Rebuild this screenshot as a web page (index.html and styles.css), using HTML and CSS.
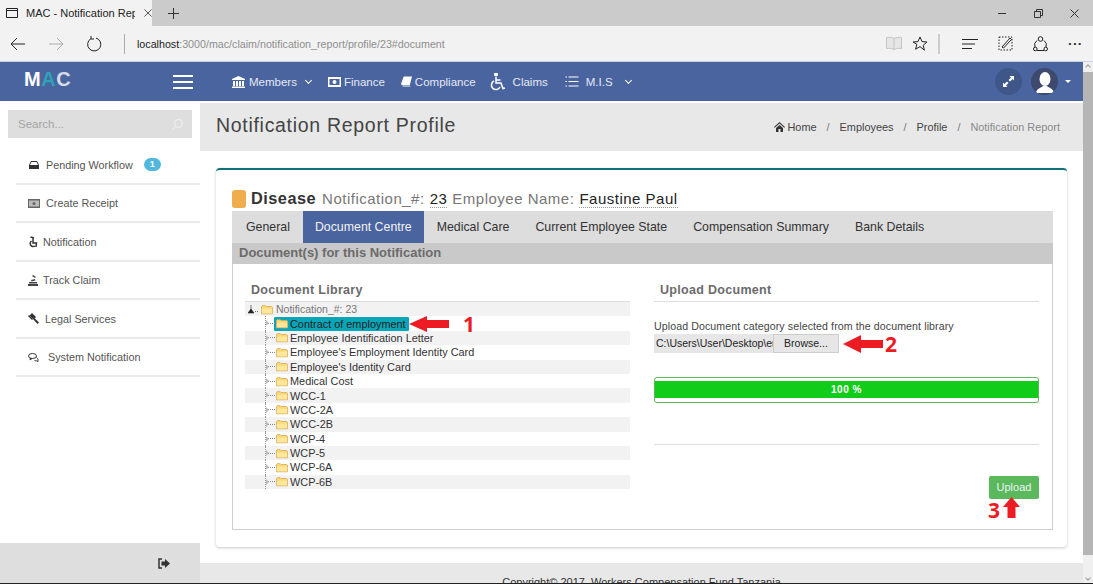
FILE: index.html
```html
<!DOCTYPE html>
<html>
<head>
    <title>MAC - Notification Report</title>
    <link rel="stylesheet" href="styles.css">
</head>
<body>
    <svg class="defs" width="0" height="0">
        <symbol id="folder" viewBox="0 0 14 12">
            <path d="M0.5 11V2.5L1.500 1.500H5L6 2.500H12.500L13.500 3.500V11Z" fill="#fbd975" stroke="#d9ab5a"/>
            <path d="M1 5H13V10.500H1Z" fill="#fde79c"/>
        </symbol>
    </svg>

    <div class="tabstrip">
        <div class="tab">
            <svg width="12" height="10" viewBox="0 0 12 10" fill="none" stroke="#222"><path d="M.5.5h11v9H.5zM.5 2.500h11"/></svg>
            <span class="tab-title">MAC - Notification Report</span>
            <svg width="8" height="8" viewBox="0 0 9 9" stroke="#444"><path d="M.5.5l8 8M8.500.5l-8 8"/></svg>
        </div>
        <svg class="newtab" width="11" height="11" viewBox="0 0 11 11" stroke="#333"><path d="M5.500 0v11M0 5.500h11"/></svg>
        <div class="winbtns">
            <svg width="9" height="9" viewBox="0 0 9 9" stroke="#333"><path d="M0 4.500h8"/></svg>
            <svg width="9" height="9" viewBox="0 0 9 9" fill="none" stroke="#333"><path d="M.5 2.500h6v6h-6zM2.500 2.500v-2h6v6h-2"/></svg>
            <svg width="9" height="9" viewBox="0 0 9 9" stroke="#333"><path d="M.5.5l8 8M8.500.5l-8 8"/></svg>
        </div>
    </div>

    <div class="addressbar">
        <svg class="nav-btn" width="16" height="14" viewBox="0 0 16 14" fill="none" stroke="#222"><path d="M15 7H1M7 1L1 7l6 6"/></svg>
        <svg class="nav-btn" width="16" height="14" viewBox="0 0 16 14" fill="none" stroke="#aaa"><path d="M1 7h14M9 1l6 6-6 6"/></svg>
        <svg class="nav-btn" width="16" height="16" viewBox="0 0 16 16" fill="none" stroke="#222"><path d="M5 2.600A6.600 6.600 0 1 0 10 2M5 0v3h3"/></svg>
        <div class="url"><b>localhost</b>:3000/mac/claim/notification_report/profile/23#document</div>
        <svg width="16" height="15" viewBox="0 0 16 15" fill="#e6e6e6" stroke="#c4c4c4"><path d="M8 2.500C6 1.500 3 1 .5 1.500v11c2.500-.5 5.500 0 7.500 1 2-1 5-1.500 7.500-1v-11C13 1 10 1.500 8 2.500zM8 2.500v11"/></svg>
        <svg class="star" width="16" height="15" viewBox="0 0 16 15" fill="none" stroke="#222"><path d="M8 1l2 4.600 5 .4-3.800 3.300 1.200 4.900L8 10.600 3.600 13.200l1.200-4.900L1 6l5-.4z"/></svg>
        <span class="bar-sep"></span>
        <svg class="tool" width="16" height="10" viewBox="0 0 16 10" stroke="#222"><path d="M0 .5h16M0 5h13M0 9.500h10"/></svg>
        <svg class="tool" width="15" height="15" viewBox="0 0 15 15" fill="none" stroke="#222"><path d="M1 1h13v13H1z" stroke-dasharray="1.500 1.500"/><path d="M4 11L12 2l1.500 1.500L5.500 12z"/></svg>
        <svg class="tool" width="15" height="16" viewBox="0 0 15 16" fill="none" stroke="#222"><path d="M4 4.500a5.500 5.500 0 0 0-2 6.500M11 4.500a5.500 5.500 0 0 1 2 6.500M4 14.500h7"/><circle cx="7.500" cy="3" r="2.300"/><circle cx="2.300" cy="13" r="1.800"/><circle cx="12.700" cy="13" r="1.800"/></svg>
        <span class="dots">&#8226;&#8226;&#8226;</span>
    </div>

    <div class="viewport">
        <div class="page">
            <header class="navbar">
                <div class="brand"><span class="brand-m">M</span><span class="brand-a">A</span>C</div>
                <div class="burger"><i></i><i></i><i></i></div>
                <nav class="topnav">
                    <a class="members">
                        <svg width="13" height="12" viewBox="0 0 13 12" fill="#fff"><path d="M6.500 0L13 3v1H0V3zM1 5h2v5H1zM4 5h2v5H4zM7 5h2v5H7zM10 5h2v5h-2zM0 10.500h13V12H0z"/></svg>
                        Members <span class="chev"></span>
                    </a>
                    <a class="finance">
                        <svg width="13" height="10" viewBox="0 0 13 10"><path d="M0 0h13v10H0z" fill="#fff"/><path d="M1.500 2h10v6h-10z" fill="#4a64a0"/><circle cx="6.500" cy="5" r="2" fill="#fff"/></svg>
                        Finance
                    </a>
                    <a class="compliance">
                        <svg width="11" height="11" viewBox="0 0 12 11" fill="#fff"><path d="M3 0h9L9.500 9.500H1.500A1.500 1.500 0 0 1 0 8z"/><path d="M1.500 10h8l.5-.5v1.500H2z"/></svg>
                        Compliance
                    </a>
                    <a class="claims">
                        <svg width="16" height="18" viewBox="0 0 15 18" fill="none" stroke="#fff" stroke-width="1.500"><circle cx="5.500" cy="1.500" r="1.300" fill="#fff"/><path d="M5.500 4v6h5l2 5.500 2-.5M5.500 7h4.500"/><path d="M3.500 8a4.500 4.500 0 1 0 6 6"/></svg>
                        Claims
                    </a>
                    <a class="mis">
                        <svg width="14" height="11" viewBox="0 0 13 11" stroke="#fff"><path d="M3 1h10M3 5.500h10M3 10h10M0 1h1.500M0 5.500h1.500M0 10h1.500"/></svg>
                        <span class="mis-label">M.I.S</span> <span class="chev"></span>
                    </a>
                </nav>
                <div class="nav-right">
                    <span class="round-btn">
                        <svg width="11" height="11" viewBox="0 0 11 11" fill="#fff"><path d="M6.500 0H11v4.500L9.500 3 7 5.500 5.500 4 8 1.500zM4.500 11H0V6.500L1.500 8 4 5.500 5.500 7 3 9.500z"/></svg>
                    </span>
                    <span class="round-btn avatar">
                        <svg width="26" height="26" viewBox="0 0 26 26" fill="#fff"><ellipse cx="13" cy="10" rx="5.500" ry="7"/><path d="M4 24c1-5 5-5 7-7h4c2 2 6 2 7 7z"/></svg>
                    </span>
                    <span class="caret"></span>
                </div>
            </header>

            <div class="layout">
                <aside class="sidebar">
                    <div class="search"><span class="search-text">Search...</span>
                        <svg width="11" height="11" viewBox="0 0 11 11" fill="none" stroke="#f2f2f2"><circle cx="6.500" cy="4.500" r="4"/><path d="M3.500 7.500L.5 10.500"/></svg>
                    </div>
                    <ul class="menu">
                        <li class="pad-wide">
                            <svg width="10" height="8" viewBox="0 0 10 8"><path d="M2 0h6l2 4v4H0V4z" fill="#333"/><path d="M2.500 1h5L9 4H1z" fill="#fff"/></svg>
                            <span>Pending Workflow</span> <span class="badge">1</span>
                        </li>
                        <li class="pad-wide">
                            <svg width="12" height="9" viewBox="0 0 12 9"><path d="M0 0h12v9H0z" fill="#666"/><path d="M1 1.500h10v6H1z" fill="#bbb"/><circle cx="6" cy="4.500" r="1.500" fill="#666"/></svg>
                            <span>Create Receipt</span>
                        </li>
                        <li class="pad-narrow">
                            <svg width="10" height="12" viewBox="0 0 9 12" fill="none" stroke="#333" stroke-width="1.500"><path d="M2 1l3.500 1M4.500 2.500V7H8l-.5 4"/><path d="M3 5a3 3 0 1 0 3.500 5"/></svg>
                            <span>Notification</span>
                        </li>
                        <li class="pad-narrow">
                            <svg width="10" height="11" viewBox="0 0 10 11" fill="#444"><path d="M0 9h10v2H0zM1 7h8v1.500H1zM3 5l4-1 .5 1.500-4 1zM5 0l3 2-1 1-3-2z"/></svg>
                            <span>Track Claim</span>
                        </li>
                        <li class="pad-mid">
                            <svg width="11" height="11" viewBox="0 0 11 11" fill="#333"><path d="M4 0l4 4-2.500 2.500-4-4zM5 6l1.200-1.200L11 9.500 9.500 11z"/><path d="M0 3l1-1 4 4-1 1z"/></svg>
                            <span>Legal Services</span>
                        </li>
                        <li class="pad-sys">
                            <svg width="11" height="9" viewBox="0 0 11 9" fill="none" stroke="#333"><ellipse cx="4.500" cy="3" rx="4" ry="2.500"/><path d="M8.500 4.500c2 1.500 1.500 3 1.500 4-1-.5-2-1-3.500-.8M2.500 5L2 7l2-1.500"/></svg>
                            <span>System Notification</span>
                        </li>
                    </ul>
                    <div class="side-foot">
                        <svg width="12" height="11" viewBox="0 0 12 11"><path d="M4 1H1v9h3" fill="none" stroke="#333" stroke-width="1.500"/><path d="M3.500 3.500H7V1l5 4.500L7 10V7.500H3.500z" fill="#333"/></svg>
                    </div>
                </aside>

                <main class="content">
                    <div class="page-head">
                        <h1>Notification Report Profile</h1>
                        <div class="crumbs">
                            <svg width="11" height="10" viewBox="0 0 11 10" fill="#333"><path d="M5.500 0L11 5l-.7.700L5.500 1.500.7 5.700 0 5zM2 6l3.500-3L9 6v4H6.500V7h-2v3H2z"/></svg>
                            <span class="crumb">Home</span><span class="slash">/</span>
                            <span class="crumb">Employees</span><span class="slash">/</span>
                            <span class="crumb">Profile</span><span class="slash">/</span>
                            <span class="crumb last">Notification Report</span>
                        </div>
                    </div>

                    <section class="card">
                        <div class="title-row">
                            <span class="tag"></span>
                            <b class="disease">Disease</b>
                            <span class="dim">Notification_#:</span> <span class="val">23</span>
                            <span class="dim">Employee Name:</span> <span class="val">Faustine Paul</span>
                        </div>
                        <div class="tabs">
                            <a>General</a>
                            <a class="active">Document Centre</a>
                            <a>Medical Care</a>
                            <a>Current Employee State</a>
                            <a>Compensation Summary</a>
                            <a>Bank Details</a>
                        </div>
                        <div class="panel-title">Document(s) for this Notification</div>
                        <div class="panel">
                            <div class="library">
                                <h3>Document Library</h3>
                                <div class="tree">
                                    <div class="tree-root">
                                        <svg width="11" height="9" viewBox="0 0 11 9"><path d="M3 0v8M0 8h6l-3-4z" fill="#222" stroke="#222" stroke-width=".6"/><path d="M7 6.500h4" stroke="#777" stroke-dasharray="1 1"/></svg>
                                        <svg class="fld" width="12" height="11"><use href="#folder"/></svg>
                                        <span class="root-label">Notification_#: 23</span>
                                    </div>
                                    <ul class="tree-list">
                                        <li><i class="conn"></i><span class="node selected"><svg class="fld" width="12" height="11"><use href="#folder"/></svg>Contract of employment</span></li>
                                        <li><i class="conn"></i><span class="node"><svg class="fld" width="12" height="11"><use href="#folder"/></svg>Employee Identification Letter</span></li>
                                        <li><i class="conn"></i><span class="node"><svg class="fld" width="12" height="11"><use href="#folder"/></svg>Employee's Employment Identity Card</span></li>
                                        <li><i class="conn"></i><span class="node"><svg class="fld" width="12" height="11"><use href="#folder"/></svg>Employee's Identity Card</span></li>
                                        <li><i class="conn"></i><span class="node"><svg class="fld" width="12" height="11"><use href="#folder"/></svg>Medical Cost</span></li>
                                        <li><i class="conn"></i><span class="node"><svg class="fld" width="12" height="11"><use href="#folder"/></svg>WCC-1</span></li>
                                        <li><i class="conn"></i><span class="node"><svg class="fld" width="12" height="11"><use href="#folder"/></svg>WCC-2A</span></li>
                                        <li><i class="conn"></i><span class="node"><svg class="fld" width="12" height="11"><use href="#folder"/></svg>WCC-2B</span></li>
                                        <li><i class="conn"></i><span class="node"><svg class="fld" width="12" height="11"><use href="#folder"/></svg>WCP-4</span></li>
                                        <li><i class="conn"></i><span class="node"><svg class="fld" width="12" height="11"><use href="#folder"/></svg>WCP-5</span></li>
                                        <li><i class="conn"></i><span class="node"><svg class="fld" width="12" height="11"><use href="#folder"/></svg>WCP-6A</span></li>
                                        <li><i class="conn"></i><span class="node"><svg class="fld" width="12" height="11"><use href="#folder"/></svg>WCP-6B</span></li>
                                    </ul>
                                </div>
                            </div>
                            <div class="uploader">
                                <h3>Upload Document</h3>
                                <p class="hint">Upload Document category selected from the document library</p>
                                <div class="filepick">
                                    <span class="path">C:\Users\User\Desktop\en</span>
                                    <span class="browse">Browse...</span>
                                </div>
                                <div class="progress"><div class="progress-bar">100 %</div></div>
                                <hr class="rule">
                                <div class="actions"><span class="btn-upload">Upload</span></div>
                            </div>

                            <div class="mark mark-1">
                                <svg width="40" height="16" viewBox="0 0 40 16"><path d="M0 8L18 0v4h22v8H18v4z" fill="#ed1c24"/></svg>
                                <span>1</span>
                            </div>
                            <div class="mark mark-2">
                                <svg width="40" height="18" viewBox="0 0 40 18"><path d="M0 9L18 0v5h22v8H18v5z" fill="#ed1c24"/></svg>
                                <span>2</span>
                            </div>
                            <div class="mark mark-3">
                                <span class="digit-3">3</span>
                                <svg width="17" height="21" viewBox="0 0 17 21"><path d="M8.500 0L17 10h-4.500v11h-8V10H0z" fill="#ed1c24"/></svg>
                            </div>
                        </div>
                    </section>

                    <footer class="foot">Copyright&copy; 2017, Workers Compensation Fund Tanzania</footer>
                </main>
            </div>
        </div>
        <div class="scrollbar">
            <span class="sb-btn"><i class="sb-up"></i></span>
            <span class="sb-thumb"></span>
            <span class="sb-track"></span>
            <span class="sb-btn"><i class="sb-dn"></i></span>
        </div>
    </div>
</body>
</html>
```

FILE: styles.css
```css
* {
    box-sizing: border-box;
}

html, body {
    margin: 0;
    padding: 0;
    height: 584px;
    overflow: hidden;
}

body {
    font-family: "Liberation Sans", Arial, sans-serif;
    font-size: 12px;
    color: #333;
    background: #fff;
    display: flex;
    flex-direction: column;
    border-bottom: 1px solid #222;
}

.defs {
    position: absolute;
}

ul {
    list-style: none;
    margin: 0;
    padding: 0;
}

/* browser chrome */
.tabstrip {
    height: 26px;
    flex: none;
    background: #cbcbcb;
    display: flex;
    align-items: center;
}

.tab {
    width: 152px;
    height: 26px;
    flex: none;
    background: #f2f2f2;
    display: flex;
    align-items: center;
    padding-left: 6px;
    color: #222;
}

.tab-title {
    width: 109px;
    margin-left: 8px;
    margin-right: 9px;
    overflow: hidden;
    white-space: nowrap;
    font-size: 11px;
}

.newtab {
    margin-left: 16px;
}

.winbtns {
    margin-left: auto;
    display: flex;
    gap: 27px;
    padding-right: 14px;
}

.addressbar {
    height: 36px;
    flex: none;
    background: #f2f2f2;
    border-bottom: 1px solid #c9d0e0;
    display: flex;
    align-items: center;
    padding-left: 10px;
}

.nav-btn {
    margin-right: 22px;
}

.url {
    flex: 1;
    height: 20px;
    line-height: 20px;
    padding-left: 12px;
    border-left: 1px solid #aaa;
    font-size: 10.700px;
    color: #8e8e8e;
}

.url b {
    font-weight: normal;
    color: #222;
}

.star {
    margin-left: 10px;
}

.bar-sep {
    width: 2px;
    height: 20px;
    background: #ccc;
    margin: 0 22px 0 10px;
}

.tool {
    margin-right: 20px;
}

.dots {
    font-size: 8px;
    letter-spacing: 2px;
    margin: 0 10px 0 1px;
    color: #222;
}

/* app */
.viewport {
    flex: 1;
    display: flex;
    min-height: 0;
}

.page {
    flex: 1;
    min-width: 0;
    display: flex;
    flex-direction: column;
}

.scrollbar {
    width: 10px;
    flex: none;
    background: #f0f0f0;
    display: flex;
    flex-direction: column;
}

.sb-btn {
    height: 10px;
    display: flex;
    align-items: center;
    justify-content: center;
}

.sb-up,
.sb-dn {
    width: 4px;
    height: 4px;
    border-left: 1px solid #999;
    border-top: 1px solid #999;
    transform: rotate(45deg);
}

.sb-dn {
    transform: rotate(225deg);
}

.sb-thumb {
    height: 483px;
    background: #b5b5b5;
}

.sb-track {
    flex: 1;
}

.navbar {
    height: 39px;
    flex: none;
    background: #4a64a0;
    display: flex;
    align-items: center;
    color: #fff;
}

.brand {
    width: 173px;
    padding: 0 0 4px 24px;
    font-size: 20px;
    font-weight: bold;
    color: #d5dcea;
    letter-spacing: 0.5px;
}

.brand-m {
    color: #fff;
}

.brand-a {
    color: #2fa3b5;
}

.burger {
    width: 20px;
    display: flex;
    flex-direction: column;
    gap: 4px;
}

.burger i {
    display: block;
    height: 2px;
    background: #fff;
}

.topnav {
    display: flex;
    align-items: center;
    margin-left: 39px;
    font-size: 11.500px;
    color: #e6e9f2;
}

.topnav a {
    display: flex;
    align-items: center;
    gap: 4px;
    white-space: nowrap;
}

.topnav .finance {
    margin-left: 17px;
    gap: 3px;
}

.topnav .compliance {
    margin-left: 16px;
    gap: 3px;
}

.claims {
    margin-left: 14px;
}

.claims svg {
    margin-right: 3px;
}

.mis {
    margin-left: 17px;
}

.mis-label {
    margin-left: 3px;
}

.chev {
    display: inline-block;
    width: 5px;
    height: 5px;
    margin: -3px 0 0 5px;
    border-right: 1px solid #fff;
    border-bottom: 1px solid #fff;
    transform: rotate(45deg);
}

.mis .chev {
    margin-left: 9px;
}

.nav-right {
    margin-left: auto;
    display: flex;
    align-items: center;
    gap: 9px;
    padding-right: 12px;
}

.round-btn {
    width: 27px;
    height: 27px;
    border-radius: 50%;
    background: #3f5689;
    display: flex;
    align-items: center;
    justify-content: center;
}

.avatar {
    background: #3d4a6e;
    overflow: hidden;
}

.caret {
    width: 0;
    height: 0;
    margin-left: -2px;
    border-left: 3px solid transparent;
    border-right: 3px solid transparent;
    border-top: 3px solid #fff;
}

.layout {
    flex: 1;
    min-height: 0;
    display: flex;
}

/* sidebar */
.sidebar {
    width: 200px;
    flex: none;
    display: flex;
    flex-direction: column;
    background: #fff;
}

.search {
    height: 28px;
    margin: 9px 8px 8px;
    padding: 0 9px 0 10px;
    background: #dedede;
    display: flex;
    align-items: center;
    justify-content: space-between;
    color: #a4a4a4;
    font-size: 11.500px;
}

.search-text {
    margin-top: -1px;
}

.menu {
    margin-left: 16px;
    flex: 1;
}

.menu li {
    height: 38.500px;
    border-bottom: 2px solid #e9e9ee;
    display: flex;
    align-items: center;
    padding: 1px 0 0 12px;
    font-size: 10.800px;
    color: #555;
    white-space: nowrap;
}

.pad-wide svg {
    margin-right: 6px;
}

.pad-wide svg:first-child {
    width: 12px;
}

.pad-narrow svg {
    margin-right: 5px;
}

.pad-mid svg {
    margin-right: 6px;
}

.pad-sys svg {
    margin-right: 9px;
}

.badge {
    width: 17px;
    height: 13px;
    margin-left: 11px;
    border-radius: 7px;
    background: #4fb8dc;
    color: #fff;
    font-size: 9px;
    font-weight: bold;
    text-align: center;
    line-height: 13px;
}

.side-foot {
    height: 40px;
    flex: none;
    background: #dedede;
    display: flex;
    align-items: center;
    justify-content: flex-end;
    padding-right: 30px;
}

/* main */
.content {
    flex: 1;
    min-width: 0;
    display: flex;
    flex-direction: column;
    padding-top: 2px;
}

.page-head {
    height: 48px;
    flex: none;
    background: #e8e8e8;
    display: flex;
    align-items: center;
    justify-content: space-between;
    padding: 0 23px 0 16px;
}

h1 {
    margin: 0 0 3px;
    font-size: 19.500px;
    font-weight: normal;
    color: #444;
    letter-spacing: 0.7px;
}

.crumbs {
    display: flex;
    align-items: center;
    font-size: 10.900px;
    color: #444;
}

.crumbs svg {
    margin-right: 3px;
}

.slash {
    margin: 0 10px;
    color: #777;
}

.last {
    color: #888;
}

.card {
    height: 379px;
    flex: none;
    margin: 17px 16px 0;
    padding: 0 14px 0 16px;
    border-top: 2px solid #12707a;
    border-radius: 4px;
    box-shadow: 0 1px 3px rgba(0, 0, 0, 0.22);
    background: #fff;
    display: flex;
    flex-direction: column;
}

.title-row {
    height: 41px;
    flex: none;
    padding-top: 19px;
    display: flex;
    align-items: baseline;
    white-space: pre;
    font-size: 15px;
    letter-spacing: 0.5px;
    color: #777;
}

.tag {
    width: 14px;
    height: 18px;
    margin: 1px 5px 0 0;
    align-self: flex-start;
    border-radius: 3px;
    background: #f0ad4e;
}

.disease {
    font-size: 16.300px;
    color: #333;
    margin-right: 6px;
}

.dim {
    margin-right: 5px;
}

.val {
    color: #222;
    margin-right: 5px;
    border-bottom: 1px dotted #999;
}

.tabs {
    height: 32px;
    flex: none;
    background: #dddddd;
    display: flex;
    font-size: 12.350px;
    color: #333;
}

.tabs a {
    padding: 0 13px;
    line-height: 32px;
    white-space: nowrap;
}

.tabs a:first-child {
    padding-left: 14px;
}

.tabs a.active {
    padding: 0 12px;
    background: #4a64a0;
    color: #f2f2f2;
}

.panel-title {
    height: 21px;
    flex: none;
    background: #c9c9c9;
    padding-left: 7px;
    font-size: 13px;
    font-weight: bold;
    line-height: 20px;
    color: #6b6b6b;
}

.panel {
    flex: 1;
    position: relative;
    display: flex;
    border: 1px solid #cfcfcf;
    border-top: 0;
    padding: 18px 13px 0 12px;
    margin-bottom: 17px;
}

.library {
    width: 385px;
    flex: none;
}

h3 {
    margin: 0;
    height: 20px;
    padding-top: 1px;
    font-size: 12.500px;
    font-weight: bold;
    color: #6b6b6b;
    border-bottom: 1px solid #ddd;
    letter-spacing: 0.3px;
}

.library h3 {
    padding-left: 6px;
}

.uploader h3 {
    padding-left: 6px;
    margin-bottom: 18px;
}

.tree-root {
    height: 14.400px;
    display: flex;
    align-items: center;
    background: #f2f2f2;
    padding-left: 3px;
    font-size: 10.500px;
    color: #777;
}

.fld {
    flex: none;
    margin-right: 2px;
}

.tree-root .fld {
    margin-left: 2px;
    margin-right: 3px;
}

.tree-list li {
    height: 14.400px;
    display: flex;
    align-items: center;
    background: #fff;
    padding-left: 20px;
    font-size: 10.900px;
    color: #333;
    white-space: nowrap;
}

.tree-list li:nth-child(even) {
    background: #f2f2f2;
}

/* dotted tree line with a small hollow expander */
.conn {
    width: 10px;
    height: 100%;
    flex: none;
    position: relative;
    border-left: 1px dotted #999;
    background: repeating-linear-gradient(90deg, #888 0 1px, transparent 1px 2px) left 50% / 100% 1px no-repeat;
}

.conn::after {
    content: "";
    position: absolute;
    left: 0;
    top: 4px;
    width: 0;
    height: 0;
    border-left: 3px solid #bbb;
    border-top: 3px solid transparent;
    border-bottom: 3px solid transparent;
}

.node {
    display: inline-flex;
    align-items: center;
    height: 14px;
    padding: 0 3px 0 1px;
}

.selected {
    background: #08a6b8;
    border-radius: 1px;
    color: #222;
    margin-left: -1px;
    padding-left: 2px;
}

.uploader {
    flex: 1;
    margin-left: 24px;
    min-width: 0;
}

.uploader .rule {
    margin: 41px 0 31px;
    border: 0;
    border-top: 1px solid #ddd;
}

.hint {
    margin: 0 0 2px;
    font-size: 10.600px;
    color: #444;
    letter-spacing: 0.1px;
}

.filepick {
    display: flex;
    height: 19px;
    font-size: 10.500px;
    color: #222;
}

.path {
    width: 119px;
    padding-left: 2px;
    overflow: hidden;
    white-space: nowrap;
    background: #e6e6e6;
    line-height: 19px;
}

.browse {
    width: 66px;
    background: #e6e6e6;
    border: 1px solid #cdcdcd;
    text-align: center;
    line-height: 17px;
}

.progress {
    height: 26px;
    margin-top: 24px;
    padding-top: 3px;
    border: 1px solid #5cb85c;
    border-radius: 3px;
    overflow: hidden;
}

.progress-bar {
    height: 17px;
    background: #12cc1a;
    color: #fff;
    font-size: 10px;
    font-weight: bold;
    line-height: 17px;
    text-align: center;
    letter-spacing: 0.5px;
}

.actions {
    display: flex;
    justify-content: flex-end;
}

.btn-upload {
    width: 50px;
    height: 23px;
    background: #5cb85c;
    border-radius: 2px;
    color: #e6f5f2;
    font-size: 11px;
    line-height: 23px;
    text-align: center;
}

/* red annotations drawn over the screenshot */
.mark {
    position: absolute;
    display: flex;
    align-items: center;
    color: #ed1c24;
    font-weight: bold;
    font-size: 21px;
    font-family: "Open Sans", "Liberation Sans", sans-serif;
    line-height: 24px;
}

.mark-1 {
    left: 176px;
    top: 48px;
    gap: 14px;
}

.mark-2 {
    left: 610px;
    top: 68px;
    gap: 2px;
}

.mark-3 {
    left: 755px;
    top: 233px;
    gap: 3px;
    align-items: flex-end;
}

.digit-3 {
    margin-bottom: -4px;
}

.foot {
    flex: 1;
    margin-top: 16px;
    background: #e8e8e8;
    text-align: center;
    padding-top: 13px;
    font-size: 11px;
    color: #333;
    overflow: hidden;
    white-space: nowrap;
}
```
